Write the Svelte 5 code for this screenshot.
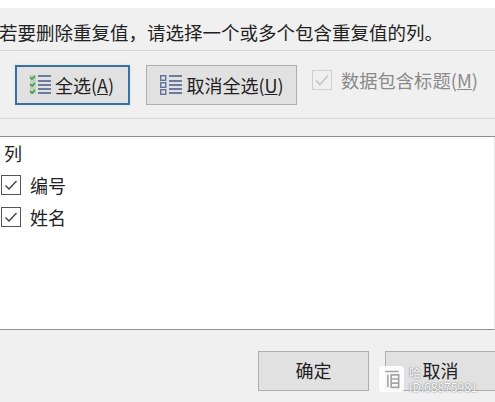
<script>
  const rows = ['编号', '姓名'];
</script>

<div class="dialog">
  <div class="prompt">若要删除重复值&#xFF0C;请选择一个或多个包含重复值的列。</div>
  <div class="toolbar">
    <button class="btn primary">
      <svg width="24" height="24" viewBox="0 0 24 24">
        <rect x="1" y="2" width="6" height="19" fill="#8fbf95" opacity="0.4" />
        <g fill="none" stroke="#3f9a4a" stroke-width="1.6">
          <path d="M1 4l2 2 3-3M1 11l2 2 3-3M1 18l2 2 3-3" />
        </g>
        <g fill="#6d7c9c">
          <rect x="9" y="2" width="13" height="2" /><rect x="9" y="7" width="13" height="2" />
          <rect x="9" y="11" width="13" height="2" /><rect x="9" y="15" width="13" height="2" />
          <rect x="9" y="19" width="13" height="2" />
        </g>
      </svg>
      <span>全选(<u>A</u>)</span>
    </button>
    <button class="btn second">
      <svg width="24" height="24" viewBox="0 0 24 24">
        <g fill="none" stroke="#5f7299" stroke-width="1.4">
          <rect x="1.7" y="2.7" width="5" height="4.6" /><rect x="1.7" y="9.7" width="5" height="4.6" /><rect x="1.7" y="16.7" width="5" height="4.6" />
        </g>
        <g fill="#6d7c9c">
          <rect x="10" y="2" width="13" height="2" /><rect x="10" y="7" width="13" height="2" />
          <rect x="10" y="11" width="13" height="2" /><rect x="10" y="15" width="13" height="2" />
          <rect x="10" y="19" width="13" height="2" />
        </g>
      </svg>
      <span>取消全选(<u>U</u>)</span>
    </button>
    <label class="header-check">
      <span class="box disabled">
        <svg width="18" height="18" viewBox="0 0 18 18"><path d="M3 9.5l4 4 8-9" fill="none" stroke="#c4c4c4" stroke-width="1.6" /></svg>
      </span>
      <span>数据包含标题(<u>M</u>)</span>
    </label>
  </div>
  <div class="strip"></div>
  <div class="list">
    <div class="list-head">列</div>
    {#each rows as row}
      <div class="row">
        <span class="box">
          <svg width="18" height="18" viewBox="0 0 18 18"><path d="M3.5 9.5l3.5 3.5 7.5-8" fill="none" stroke="#444" stroke-width="1.4" /></svg>
        </span>
        <span>{row}</span>
      </div>
    {/each}
  </div>
  <div class="footer">
    <button class="btn action">确定</button>
    <button class="btn action last">取消</button>
  </div>
  <div class="watermark">
    <div class="mark-icon">
      <svg width="20" height="22" viewBox="0 0 24 26">
        <path d="M4 4h16M7 8v15M11 8h9v15h-9zM11 13h9M11 18h9" fill="none" stroke="#a5a5a5" stroke-width="2" />
      </svg>
    </div>
    <div class="mark-text"><span>哈</span><span>ID:68875981</span></div>
  </div>
</div>

<style>
  :global(body) {
    margin: 0;
    background: #fff;
  }
  .dialog {
    position: relative;
    width: 495px;
    height: 402px;
    overflow: hidden;
    display: flex;
    flex-direction: column;
    padding-top: 8px;
    box-sizing: border-box;
    background: #f0f0f0;
    box-shadow: inset 0 8px 0 #fff;
    font-family: "Noto Sans CJK SC", "Liberation Sans", sans-serif;
    color: #222;
  }
  .prompt {
    height: 43px;
    box-sizing: border-box;
    padding-top: 10px;
    margin-left: -1px;
    font-size: 18.5px;
    line-height: 28px;
    white-space: nowrap;
    border-bottom: 1px solid #d4d4d4;
  }
  .toolbar {
    height: 68px;
    box-sizing: border-box;
    display: flex;
    align-items: flex-start;
    padding: 14px 0 0 15px;
    border-bottom: 1px solid #d9d9d9;
  }
  .btn {
    font: inherit;
    color: #222;
    background: #e1e1e1;
    border: 1px solid #adadad;
    padding: 0;
    display: flex;
    align-items: center;
    justify-content: center;
    font-size: 18px;
    box-sizing: border-box;
  }
  .primary {
    width: 115px;
    height: 40px;
    border: 2px solid #3a6f9e;
    box-shadow: 0 0 3px #cfe6f8;
    gap: 2px;
    padding-right: 2px;
  }
  .second {
    width: 151px;
    height: 40px;
    margin-left: 16px;
    gap: 3px;
  }
  .header-check {
    display: flex;
    align-items: center;
    height: 30px;
    margin-left: 15px;
    gap: 9px;
    font-size: 18.3px;
    color: #8a8a8a;
  }
  .box {
    width: 18px;
    height: 18px;
    border: 1px solid #555;
    background: #fff;
    display: block;
    flex: none;
  }
  .box svg {
    display: block;
  }
  .box.disabled {
    border-color: #cfcfcf;
    background: #f0f0f0;
  }
  .strip {
    height: 17px;
    border-bottom: 1px solid #8f8f8f;
  }
  .list {
    height: 193px;
    box-sizing: border-box;
    background: #fff;
    border-right: 1px solid #e6e6e6;
    border-bottom: 1px solid #8f8f8f;
    font-size: 18px;
    padding-left: 1px;
  }
  .list-head {
    height: 32px;
    line-height: 32px;
    padding-left: 3px;
  }
  .row {
    height: 32px;
    display: flex;
    align-items: center;
    gap: 9px;
  }
  .footer {
    flex: 1;
    display: flex;
    padding: 21px 0 0 258px;
    gap: 16px;
  }
  .action {
    width: 111px;
    height: 40px;
    flex: none;
    padding-bottom: 2px;
  }
  .watermark {
    position: absolute;
    left: 379px;
    top: 366px;
    display: flex;
    gap: 5px;
    align-items: flex-start;
    pointer-events: none;
  }
  .mark-icon {
    width: 25px;
    height: 26px;
    background: rgba(255, 255, 255, 0.9);
    border-radius: 4px;
    display: flex;
    align-items: center;
    justify-content: center;
  }
  .mark-text {
    display: flex;
    flex-direction: column;
    font-size: 12px;
    line-height: 14px;
    color: #fff;
    text-shadow: 0 0 1px #777, 0 0 2px #999;
  }
</style>
